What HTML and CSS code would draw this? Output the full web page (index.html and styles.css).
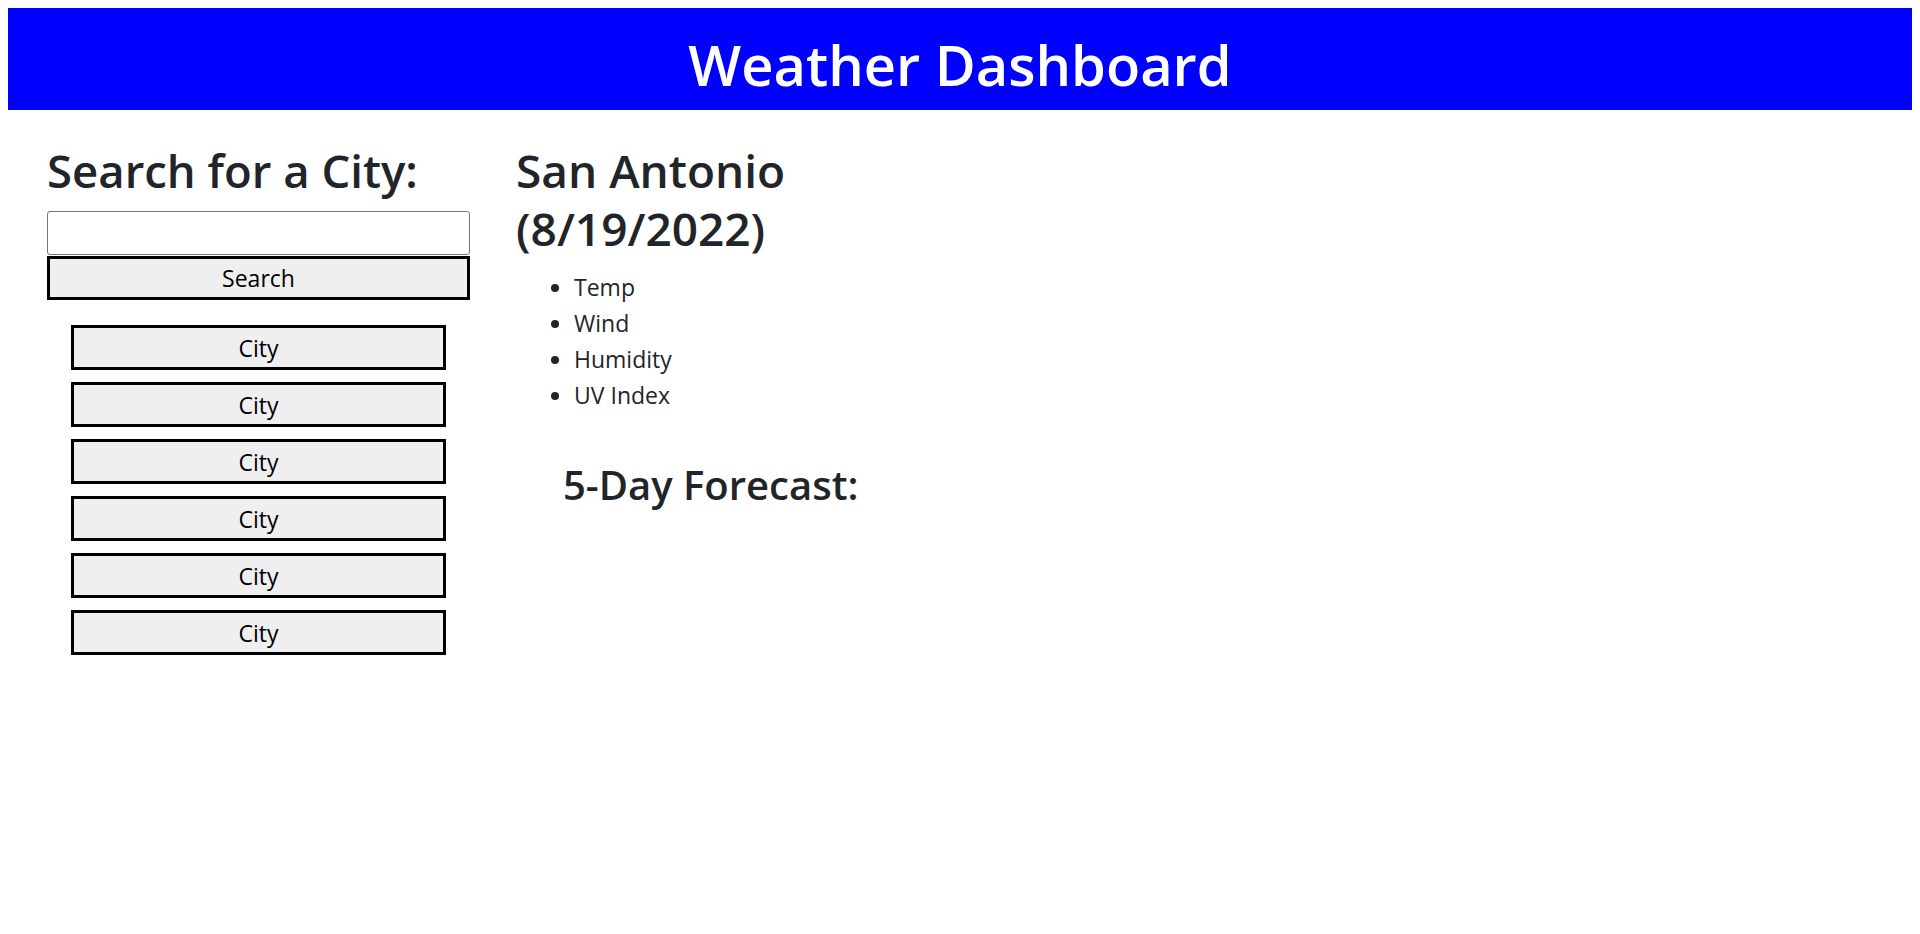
FILE: index.html
```html
<!DOCTYPE html>
<html lang="en">
<head>
<meta charset="utf-8">
<title>Weather Dashboard</title>
<link rel="stylesheet" href="styles.css">
</head>
<body>
<header class="site-header">
  <h1 class="site-title">Weather Dashboard</h1>
</header>
<main class="layout">
  <aside class="sidebar">
    <h2 class="search-title">Search for a City:</h2>
    <input class="search-input" type="text">
    <button class="search-btn" type="button">Search</button>
    <div class="history">
      <button class="city-btn" type="button">City</button>
      <button class="city-btn" type="button">City</button>
      <button class="city-btn" type="button">City</button>
      <button class="city-btn" type="button">City</button>
      <button class="city-btn" type="button">City</button>
      <button class="city-btn" type="button">City</button>
    </div>
  </aside>
  <section class="current">
    <h2 class="city-name">San Antonio (8/19/2022)</h2>
    <ul class="stats">
      <li>Temp</li>
      <li>Wind</li>
      <li>Humidity</li>
      <li>UV Index</li>
    </ul>
    <h3 class="forecast-title">5-Day Forecast:</h3>
  </section>
</main>
</body>
</html>
```

FILE: styles.css
```css
html, body {
  background: #ffffff;
}

body {
  margin: 8px;
  font-family: "Open Sans", "Noto Sans", sans-serif;
  font-size: 23px;
  line-height: 36px;
  color: #212529;
}

.site-header {
  box-sizing: border-box;
  height: 102px;
  background: #0000ff;
  display: flex;
  justify-content: center;
  align-items: flex-start;
  padding-top: 20px;
}

.site-title {
  margin: 0;
  font-size: 56px;
  line-height: 72px;
  font-weight: 600;
  color: #ffffff;
}

.layout {
  display: flex;
  align-items: flex-start;
  padding-top: 30px;
}

.sidebar {
  margin-left: 39px;
  width: 423px;
  display: flex;
  flex-direction: column;
}

.search-title {
  margin: 0 0 10px 0;
  font-size: 45.5px;
  line-height: 61px;
  font-weight: 600;
  white-space: nowrap;
}

.search-input {
  box-sizing: border-box;
  width: 423px;
  height: 44px;
  margin: 0;
  border: 1px solid #767676;
  border-radius: 3px;
  background: #ffffff;
  font-family: inherit;
  font-size: 23px;
  padding: 0 4px;
}

.search-btn,
.city-btn {
  box-sizing: border-box;
  display: flex;
  align-items: center;
  justify-content: center;
  margin: 0;
  padding: 0;
  background: #efefef;
  border: 3px solid #000000;
  font-family: inherit;
  font-size: 23px;
  color: #000000;
}

.search-btn {
  width: 423px;
  height: 44px;
  margin-top: 1px;
}

.history {
  display: flex;
  flex-direction: column;
  gap: 12px;
  margin-top: 25px;
  margin-left: 24px;
}

.city-btn {
  width: 375px;
  height: 45px;
}

.current {
  margin-left: 46px;
  width: 420px;
  margin-top: 2px;
}

.city-name {
  margin: 0 0 12px 0;
  font-size: 46px;
  line-height: 57.6px;
  font-weight: 600;
}

.stats {
  margin: 0;
  padding-left: 58px;
}

.stats li {
  line-height: 36px;
}

.forecast-title {
  margin: 47px 0 0 47px;
  font-size: 40px;
  line-height: 50.4px;
  font-weight: 600;
  white-space: nowrap;
}
```
